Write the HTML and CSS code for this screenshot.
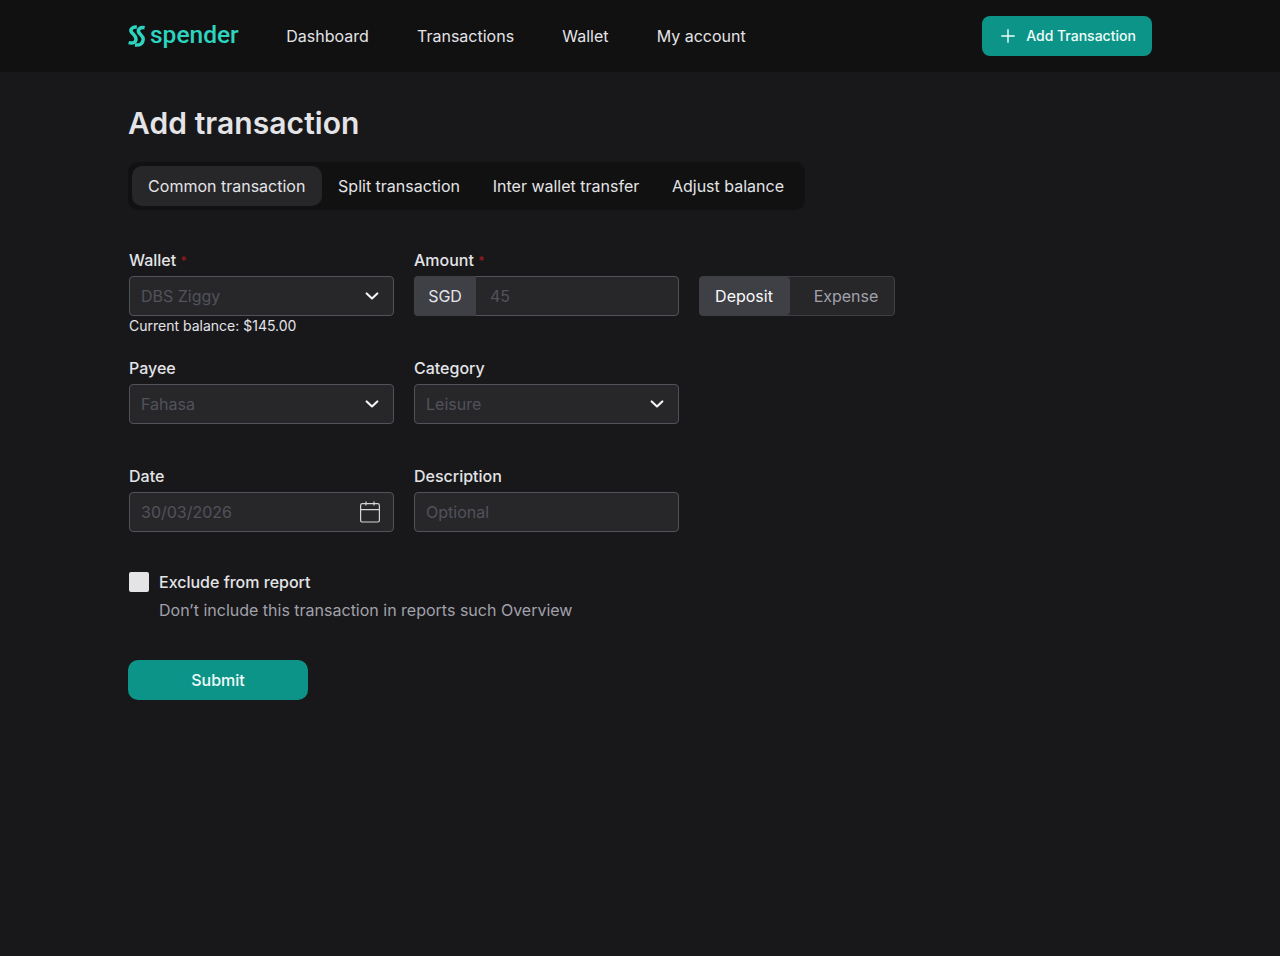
FILE: index.html
```html
<!DOCTYPE html>
<html lang="en">
  <head>
    <meta charset="utf-8">
    <title>Spender - Add transaction</title>
    <link rel="stylesheet" href="styles.css">
  </head>
  <body>
    <header class="header">
      <div class="container header-inner">
        <a class="logo" href="#">
          <svg width="18" height="24" viewBox="0 0 18 24" fill="none" stroke="currentColor" stroke-width="3.5">
            <path d="M8.8 3.2C4.4 2.6 1.8 5.4 3.4 8C4.8 10.2 8 11.6 8 15C8 18.4 5 19.8 0.6 18.6" />
            <path d="M16.6 3.8C12.2 2.8 9.4 5.4 10.8 8.4C12 10.8 15.4 12 15.2 15.4C15 19 12.4 21.6 7 21" />
          </svg>
          <span class="logo-text">spender</span>
        </a>
        <nav class="nav">
          <a href="#">Dashboard</a>
          <a href="#">Transactions</a>
          <a href="#">Wallet</a>
          <a href="#">My account</a>
        </nav>
        <button class="btn btn-add">
          <svg width="14" height="14" viewBox="0 0 14 14" fill="none" stroke="currentColor" stroke-width="1.4" stroke-linecap="round">
            <path d="M7 0.8V13.2M0.8 7H13.2" />
          </svg>
          Add Transaction
        </button>
      </div>
    </header>

    <main class="container">
      <h1>Add transaction</h1>

      <div class="tabs">
        <button class="tab active">Common transaction</button>
        <button class="tab">Split transaction</button>
        <button class="tab">Inter wallet transfer</button>
        <button class="tab">Adjust balance</button>
      </div>

      <form>
        <div class="row">
          <div class="field">
            <label>Wallet <span class="required">*</span></label>
            <div class="control">
              <span class="placeholder">DBS Ziggy</span>
              <svg class="chevron" width="14" height="8" viewBox="0 0 14 8"><path d="M1.7 1.4L7 6.5L12.3 1.4" /></svg>
            </div>
            <p class="hint">Current balance: $145.00</p>
          </div>
          <div class="field">
            <label>Amount <span class="required">*</span></label>
            <div class="control amount">
              <span class="currency">SGD</span>
              <span class="placeholder">45</span>
            </div>
          </div>
          <div class="toggle">
            <button type="button" class="toggle-item on">Deposit</button>
            <button type="button" class="toggle-item">Expense</button>
          </div>
        </div>

        <div class="row">
          <div class="field">
            <label>Payee</label>
            <div class="control">
              <span class="placeholder">Fahasa</span>
              <svg class="chevron" width="14" height="8" viewBox="0 0 14 8"><path d="M1.7 1.4L7 6.5L12.3 1.4" /></svg>
            </div>
          </div>
          <div class="field">
            <label>Category</label>
            <div class="control">
              <span class="placeholder">Leisure</span>
              <svg class="chevron" width="14" height="8" viewBox="0 0 14 8"><path d="M1.7 1.4L7 6.5L12.3 1.4" /></svg>
            </div>
          </div>
        </div>

        <div class="row">
          <div class="field">
            <label>Date</label>
            <div class="control">
              <span class="placeholder">30/03/2026</span>
              <svg class="calendar" width="20" height="22" viewBox="0 0 20 22">
                <rect x="0.6" y="2.6" width="18.8" height="18.4" rx="1.8" />
                <path d="M0.6 8.6H19.4M6 0.6V4.4M14 0.6V4.4" />
              </svg>
            </div>
          </div>
          <div class="field">
            <label>Description</label>
            <div class="control">
              <span class="placeholder">Optional</span>
            </div>
          </div>
        </div>

        <div class="exclude">
          <span class="checkbox"></span>
          <div>
            <p class="exclude-title">Exclude from report</p>
            <p class="exclude-text">Don’t include this transaction in reports such Overview</p>
          </div>
        </div>

        <button type="button" class="btn btn-submit">Submit</button>
      </form>
    </main>
  </body>
</html>
```

FILE: styles.css
```css
* {
  box-sizing: border-box;
}

body {
  margin: 0;
  background: #18181b;
  color: #e4e4e7;
  font-family: Inter, sans-serif;
  font-size: 16px;
  line-height: 24px;
}

h1, p {
  margin: 0;
}

a {
  color: inherit;
  text-decoration: none;
}

button {
  border: 0;
  padding: 0;
  background: none;
  color: inherit;
  font: inherit;
  cursor: pointer;
}

.container {
  width: 1024px;
  margin: 0 auto;
}

.header {
  background: #111111;
}

.header-inner {
  display: flex;
  align-items: center;
  height: 72px;
}

.logo {
  display: flex;
  align-items: center;
  width: 110px;
  color: #2dd4bf;
}

.logo svg {
  flex: none;
}

.logo-text {
  margin-left: 4px;
  padding-bottom: 3px;
  font-family: Roboto, sans-serif;
  font-size: 24.5px;
  font-weight: 500;
  line-height: 24px;
}

.nav {
  display: flex;
  gap: 48.2px;
  margin-left: 48.3px;
}

.btn {
  background: #0d9488;
  color: #f0fdfa;
  font-weight: 500;
}

.btn-add {
  display: flex;
  align-items: center;
  justify-content: center;
  gap: 11px;
  width: 170px;
  height: 40px;
  margin-left: auto;
  padding-left: 3px;
  border-radius: 8px;
  font-size: 14px;
}

h1 {
  margin-top: 31px;
  font-size: 30px;
  font-weight: 600;
  letter-spacing: 0.07px;
  line-height: 40px;
}

.tabs {
  display: inline-flex;
  height: 48px;
  margin-top: 19px;
  padding: 4px;
  border-radius: 10px;
  background: #111111;
}

.tab {
  padding: 0 16.6px 0 16.1px;
  border-radius: 10px;
}

.tab.active {
  background: #27272a;
}

form {
  margin: 38px 0 0 1px;
}

.row {
  display: flex;
  gap: 20px;
  height: 108px;
}

.field {
  width: 265px;
}

label {
  display: block;
  height: 28px;
  font-weight: 500;
}

.required {
  color: #991b1b;
  font-size: 12px;
  line-height: 1;
  vertical-align: 1px;
}

.control {
  display: flex;
  align-items: center;
  justify-content: space-between;
  height: 40px;
  padding: 0 13px 0 11px;
  border: 1px solid #52525b;
  border-radius: 4px;
  background: #27272a;
}

.placeholder {
  color: #52525b;
}

.chevron {
  margin-right: 1px;
  fill: none;
  stroke: #f4f4f5;
  stroke-width: 2.1;
  stroke-linecap: round;
  stroke-linejoin: round;
}

.calendar {
  fill: none;
  stroke: #d4d4d8;
  stroke-width: 1.2;
}

.hint {
  font-size: 14px;
  line-height: 20px;
}

.amount {
  justify-content: flex-start;
  gap: 14px;
  padding: 0;
}

.currency {
  width: 62px;
  height: 40px;
  margin: -1px 0 -1px -1px;
  border-radius: 4px 0 0 4px;
  background: #3f3f46;
  line-height: 40px;
  text-align: center;
}

.toggle {
  display: flex;
  width: 196px;
  height: 40px;
  margin-top: 28px;
  border: 1px solid #3f3f46;
  border-radius: 4px;
  background: #27272a;
  color: #a1a1aa;
}

.toggle-item {
  flex: 1;
  padding-left: 8px;
}

.toggle-item.on {
  flex: none;
  width: 90px;
  padding: 0 2px 0 0;
  border-radius: 0 4px 4px 0;
  background: #3f3f46;
  color: #fafafa;
}

.exclude {
  display: flex;
  gap: 10px;
  margin-top: -2px;
}

.checkbox {
  width: 20px;
  height: 20px;
  margin-top: 2px;
  border-radius: 2px;
  background: #e4e4e7;
}

.exclude-title {
  font-weight: 500;
}

.exclude-text {
  margin-top: 4px;
  color: #a1a1aa;
}

.btn-submit {
  width: 180px;
  height: 40px;
  margin: 38px 0 0 -1px;
  border-radius: 10px;
}
```
